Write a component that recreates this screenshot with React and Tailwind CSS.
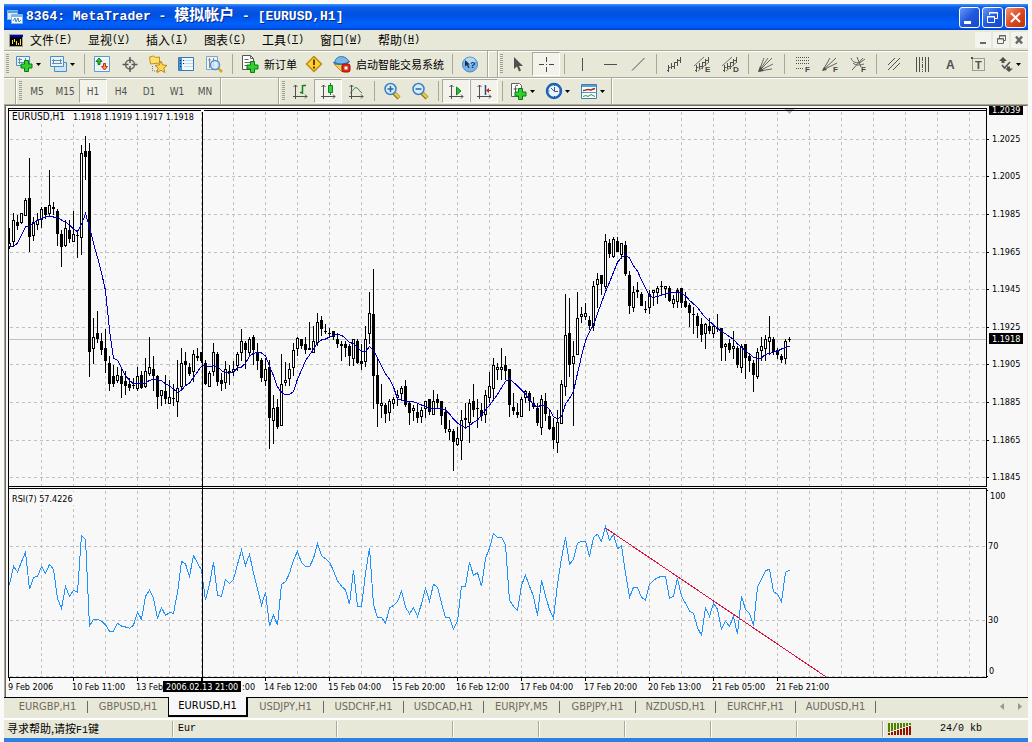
import React from "react";

/* ---------- market data (one entry per hourly bar, 4px apart) ---------- */
/* each bar: high, body top, body bottom, low, u = rising / d = falling; thirds of a pixel below `top` */
const BARS = [
  {
    top: 100,
    rows: `384 430 438 448 u,340 361 425 443 u,346 367 380 392 d,340 340 367 373 u,295 300 346 346 u,174 295 413 456 d,352 367 407 425 u,340 361 373 392 u,322 328 358 385 u,322 322 346 358 d,210 316 341 349 u,306 321 329 346 d,328 334 404 438 d,390 404 443 503 d,362 385 436 443 u,361 391 419 431 d,334 404 425 425 u,392 405 407 476 d,136 160 412 465 u,108 153 171 240 d,129 153 758 831 d,654 712 745 792 u,633 700 719 731 d,699 724 752 765 d,687 745 785 821 d,768 789 854 873 d,795 829 854 861 d,802 826 841 850 u,802 829 854 894 d,813 845 860 887 d,834 853 866 873 d,834 857 860 867 d,801 829 866 873 u,813 826 866 867 d,774 814 860 866 u,711 802 821 828 u,768 807 828 873 d,826 829 893 927 d,870 870 886 918 u,825 873 899 912 d,841 892 910 912 u,852 896 899 918 d,780 865 905 951 u,744 790 860 873 u,756 783 797 855 d,789 801 822 828 d,750 763 815 848 u,744 768 776 783 d,756 756 783 790 d,780 789 854 855 d,813 820 860 860 u,729 757 815 828 u,757 762 848 860 d,820 840 854 873 d,783 808 848 867 u,795 813 821 855 d,783 808 815 828 u,756 763 796 815 u,687 724 757 783 u,724 729 752 809 d,711 718 757 765 u,705 712 752 795 d,731 756 785 810 d,774 780 836 848 d,774 808 842 860 u`,
  },
  {
    top: 260,
    rows: `302 322 476 567 d,405 446 482 554 u,418 442 502 509 d,282 374 497 498 u,308 362 368 380 u,309 328 355 380 u,249 271 322 350 u,231 234 265 290 u,237 237 260 267 d,232 253 272 284 d,186 264 272 272 d,198 244 277 278 u,159 187 247 260 u,168 180 208 228 d,193 213 215 224 d,204 219 222 230 d,213 214 233 240 d,219 237 252 266 d,243 252 260 303 d,243 252 266 291 d,252 258 290 318 d,238 238 296 318 u,238 243 311 312 d,252 304 312 330 d,198 238 304 322 u,96 160 220 252 u,27 162 350 447 d,298 346 432 503 d,372 430 437 476 u,429 435 464 490 d,418 424 458 483 u,411 418 430 447 u,391 405 413 438 u,378 385 401 417 u,360 379 436 443 d,423 430 459 497 d,436 445 452 483 u,429 456 476 490 d,442 451 470 490 u,423 424 445 476 u,418 418 458 465 d,390 424 464 464 u,402 417 430 447 d,423 424 470 497 d,441 457 509 521 d,480 507 515 542 u,507 513 548 633 d,501 535 554 560 u,450 482 542 600 u,430 475 482 509 d,418 430 488 549 u,372 424 452 471 d,417 444 446 504 d,430 450 470 483 d,390 406 464 489 u,338 379 413 431 u,294 316 386 425 u,309 322 329 362 u,264 322 328 362 u,288 316 335 362 d,328 328 437 471 d,399 441 453 465 d,429 457 465 476 d,411 418 470 470 u`,
  },
  {
    top: 220,
    rows: `511 515 532 551 u,514 520 545 573 d,531 549 563 567 d,549 564 611 618 d,525 538 622 647 u,519 544 584 603 d,567 588 629 630 d,594 621 662 687 d,570 607 667 699 u,480 493 610 611 u,222 346 500 530 u,234 340 437 471 d,363 409 431 618 u,216 295 403 404 u,261 283 289 309 u,249 280 289 302 u,288 301 320 330 d,184 199 316 335 u,159 178 192 264 u,165 165 194 225 d,42 64 199 207 u,57 70 104 116 d,52 58 110 116 u,52 64 98 98 d,70 70 103 117 u,63 75 162 168 d,153 165 258 284 d,198 217 262 276 u,186 210 218 236 d,216 222 258 258 d,243 267 269 281 d,210 223 262 284 u,210 211 218 258 u,198 205 217 252 u,183 198 200 230 d,198 199 206 236 u,198 205 245 246 d,225 238 251 264 u,204 211 245 264 u,204 205 251 264 d,216 244 263 264 d,249 256 281 321 d,261 282 284 342 d,279 289 320 354 d,295 312 347 366 d,309 313 341 387 u,294 318 335 342 d,312 319 341 354 u,282 325 329 336 d,324 324 386 423 d,369 373 380 425 u,357 370 392 399 d,333 379 386 417 u,378 385 437 444 d,372 380 442 461 u,372 373 416 477 d,399 409 425 456 d,420 430 467 516 d,384 397 470 477 u,351 379 392 423 u,345 358 386 423 u,288 352 365 405 u,351 358 398 405 d,385 391 405 417 d,402 409 422 431 d,357 364 416 432 u,352 357 360 366 d`,
  },
];

const AVERAGE = [
  { top: 100, ys: [439, 438, 430, 405, 380, 379, 370, 361, 355, 351, 348, 351, 351, 360, 367, 374, 387, 395, 373, 341, 380, 430, 472, 518, 572, 690, 775, 781, 805, 827, 841, 852, 851, 851, 850, 841, 838, 839, 842, 851, 857, 868, 877, 870, 857, 850, 832, 815, 799, 797, 800, 797, 800, 812, 817, 820, 815, 805, 801, 790, 768, 760, 757, 759, 768] },
  { top: 260, ys: [318, 347, 381, 397, 405, 403, 395, 357, 331, 302, 285, 268, 247, 240, 237, 231, 226, 223, 226, 235, 247, 251, 263, 273, 274, 260, 272, 294, 319, 342, 358, 381, 417, 420, 424, 426, 425, 430, 435, 440, 446, 447, 444, 446, 451, 461, 477, 489, 497, 503, 497, 487, 480, 465, 450, 436, 420, 403, 383, 364, 357, 367, 378, 390] },
  { top: 220, ys: [522, 538, 556, 560, 556, 556, 568, 590, 596, 590, 552, 535, 514, 460, 409, 362, 335, 315, 280, 248, 215, 187, 157, 127, 112, 105, 114, 137, 153, 180, 203, 230, 232, 230, 225, 223, 219, 217, 216, 218, 228, 241, 252, 262, 279, 293, 304, 315, 325, 335, 341, 350, 358, 372, 382, 393, 402, 412, 415, 414, 403, 400, 397, 393, 387, 383, 378] },
];

const RSI = [
  { top: 480, ys: [314, 259, 276, 245, 217, 328, 292, 289, 260, 280, 253, 268, 355, 385, 320, 349, 331, 336, 166, 178, 438, 418, 418, 424, 434, 454, 454, 430, 438, 441, 445, 436, 396, 418, 349, 331, 355, 414, 383, 406, 398, 400, 338, 244, 252, 289, 227, 249, 270, 361, 313, 247, 346, 349, 298, 310, 298, 253, 211, 256, 223, 280, 328, 376, 336, 438, 406, 436, 313, 305, 280, 241, 214, 248, 260, 260, 235, 191, 227, 236, 247, 272, 303, 319, 330, 373, 271, 379, 380, 280, 203, 374, 412, 412, 430, 384, 376, 365, 334, 382, 401, 383, 409, 372, 325, 363, 313, 322, 370, 412, 412, 448, 424, 319, 319, 247, 286, 278, 319, 235, 205, 160, 172, 172, 196, 361, 379, 391, 316, 286, 319, 349, 407, 301, 349, 388, 415, 313, 235, 172, 253, 238, 190, 184, 184, 230, 172, 163, 184, 139, 181, 163, 206, 197, 280, 352, 322, 322, 352, 361, 313, 301, 293, 289, 289, 355, 348, 295, 349, 370, 394, 400, 443, 466, 383, 409, 370, 388, 448, 424, 439, 409, 463, 349, 388, 401, 437, 322, 296, 272, 268, 335, 343, 367, 277, 271] },
];

const toPoints = (parts) =>
  parts
    .flatMap((p) => p.ys.map((y) => p.top + y / 3))
    .map((y, i) => `${9.5 + i * 4},${y.toFixed(1)}`)
    .join(" ");

const candles = BARS.flatMap((s) =>
  s.rows.split(",").map((r) => {
    const [h, t, b, l, dir] = r.split(" ");
    const y = (v) => Math.round(s.top + (Number(v) - 1) / 3);
    return { high: y(h), top: y(t), bottom: y(b), low: y(l), up: dir === "u" };
  })
);

const PRICES = [["1.2025", 139], ["1.2005", 176], ["1.1985", 214], ["1.1965", 252], ["1.1945", 289], ["1.1925", 327], ["1.1905", 364], ["1.1885", 402], ["1.1865", 440], ["1.1845", 477]];
/* [label, x]; the third and fourth are cut by the crosshair time */
const TIMES = [["9 Feb 2006", 0], ["10 Feb 11:00", 64], ["13 Feb", 128], [":00", 234], ["14 Feb 12:00", 256], ["15 Feb 04:00", 320], ["15 Feb 20:00", 384], ["16 Feb 12:00", 448], ["17 Feb 04:00", 512], ["17 Feb 20:00", 576], ["20 Feb 13:00", 640], ["21 Feb 05:00", 704], ["21 Feb 21:00", 768]];
const COLUMNS = Array.from({ length: 60 }, (_, i) => 41 + i * 32);

/* ------------------------------- chart -------------------------------- */
function Plot() {
  return (
    <svg className="block h-[589px] w-full" role="img" aria-label="EURUSD H1 chart with RSI(7)">
      <g transform="translate(-8 -108)" shapeRendering="crispEdges">
        <g stroke="#c0c0c0" strokeDasharray="3 3">
          {COLUMNS.map((x) => (
            <path key={x} d={`M${x}.5 112V486M${x}.5 491V677`} />
          ))}
          {PRICES.map(([p, y]) => <path key={p} d={`M10 ${y}.5H2400`} />)}
          <path d="M10 546.5H2400M10 620.5H2400M10 676.5H2400" />
        </g>
        <path d="M9 339.5H2400" stroke="#c0c0c0" />
        <path d="M785 109h9l-4.500 5z" fill="#b8b8b8" />
        <path d="M12 111h184v11H12zM12 492h64v13H12z" fill="#f8f8f8" />
        {candles.map((c, i) => {
          const x = 9 + i * 4;
          const h = Math.max(1, c.bottom - c.top + (c.up ? 1 : 0));
          return (
            <g key={i}>
              <rect x={x} y={c.high} width="1" height={Math.max(1, c.low - c.high)} />
              <rect x={x - 1} y={c.top} width="3" height={h} />
              {c.up && h > 2 && <rect x={x} y={c.top + 1} width="1" height={h - 2} fill="#fff" />}
            </g>
          );
        })}
        <polyline points={toPoints(AVERAGE)} fill="none" stroke="#0000c0" />
        <polyline points={toPoints(RSI)} fill="none" stroke="#1e90ff" />
        <path d="M605.500 528L827 677.500" stroke="#d8143c" fill="none" />
        <path d="M8 108.500H2400M8 110.500H201M204 110.500H2400M8 486.500H2400M8 488.500H2400M8 677.500H2400M8.500 108V678M202.500 112V682" stroke="#000" />
        {TIMES.map(([t], i) => <rect key={t} x={9 + i * 64} y="678" width="1" height="3" />)}
      </g>
      <g className="font-['DejaVu_Sans_Condensed','DejaVu_Sans',sans-serif] text-[9px]">
        <text x="4" y="12" className="text-[10px]">EURUSD,H1</text>
        <text x="65" y="12">1.1918 1.1919 1.1917 1.1918</text>
        <text x="4" y="394">RSI(7) 57.4226</text>
        {TIMES.map(([t, x]) => <text key={t} x={x} y="582">{t}</text>)}
        <rect x="155" y="573" width="78" height="11" />
        <text x="158" y="582" fill="#fff">2006.02.13 21:00</text>
      </g>
    </svg>
  );
}

function PriceAxis() {
  return (
    <svg className="block h-[591px] w-[41px] shrink-0 overflow-visible font-['DejaVu_Sans_Condensed','DejaVu_Sans',sans-serif] text-[9px]" role="img" aria-label="Price axis">
      <g transform="translate(-986 -106)">
        <g shapeRendering="crispEdges">
          <rect x="986" y="108" width="1" height="379" />
          <rect x="986" y="488" width="1" height="190" />
          {PRICES.map(([p, y]) => <rect key={p} x="987" y={y} width="2" height="1" />)}
          <rect x="987" y="490" width="1" height="1" />
          <rect x="987" y="676" width="1" height="1" />
          <rect x="989" y="106" width="34" height="9" />
          <rect x="989" y="333" width="34" height="11" />
        </g>
        {PRICES.map(([p, y]) => <text key={p} x="992" y={y + 3}>{p}</text>)}
        <text x="992" y="113" fill="#fff">1.2039</text>
        <text x="992" y="342" fill="#fff">1.1918</text>
        <text x="990" y="499">100</text>
        <text x="988" y="549">70</text>
        <text x="988" y="623">30</text>
        <text x="989" y="674">0</text>
      </g>
    </svg>
  );
}

/* ------------------------------- icons -------------------------------- */
const Icon = ({ children }) => (
  <svg viewBox="0 0 20 20" className="block size-5 shrink-0 overflow-visible" fill="none" aria-hidden="true">{children}</svg>
);
const G = "#505050";
const Plus = ({ x, y }) => (
  <path transform={`translate(${x} ${y})`} d="M3.500.500h4v3.500h3.500v4H7.500v3.500h-4V8H0V4h3.500z" fill="#2fd02f" stroke="#0b7a10" />
);
const SmallF = ({ children = "F" }) => (
  <text x="13" y="18" fill="#444" className="font-['Liberation_Sans',sans-serif] text-[8px] leading-none font-bold">{children}</text>
);
const Caret = () => (
  <svg viewBox="0 0 5 3" className="block h-[3px] w-[5px] shrink-0" aria-hidden="true"><path d="M0 0h5L2.500 3z" /></svg>
);
const Lens = () => (
  <>
    <path d="M12 12l5 5" stroke="#8a6a10" strokeWidth="4" />
    <path d="M12.500 12l4.500 4.500" stroke="#f0c840" strokeWidth="2.500" />
    <circle cx="8.500" cy="8" r="5.500" fill="#d4ecfc" stroke="#3a80c4" strokeWidth="1.500" />
  </>
);
const Axes = () => <path d="M5.500 4v14M3 15.500h14M3.500 6l2-2 2 2M15 13.500l2 2-2 2" stroke={G} />;
const Wave = () => <path d="M4.500 11v7M3 16.500h1.500M4.500 13.500h2M7.500 9v6M8 12.500h2M10.500 8v7M11 8.500h2M13.500 5v7M14 6.500h2M16.500 3v6" stroke={G} />;

const icons = {
  newChart: <Icon><path d="M1.500 2.500h13v9h-13z" fill="#e8f4fc" stroke="#4d8fc4" /><path d="M4.500 4v6M3 8.500h9M3 5.500h4M10.500 4v6" stroke="#6b8ba8" /><Plus x={6} y={6} /></Icon>,
  profiles: <Icon><path d="M5.500 8.500h12v9h-12z" fill="#cfe4f6" stroke="#4d8fc4" /><path d="M1.500 2.500h13v10h-13z" fill="#e8f4fc" stroke="#4d8fc4" /><path d="M4.500 5v5M3 9.500h10M3 6.500h10M11.500 5v5" stroke="#6b8ba8" /></Icon>,
  market: <Icon><path d="M2.500 2.500h15v15h-15z" fill="#f4faff" stroke="#5b9bd0" /><path d="M4 6h12M4 9h12M4 12h12M4 15h12" stroke="#d4e4f0" /><path d="M7 4l3 3.500H8v3H6v-3H4z" fill="#3cc03c" stroke="#0b7a10" /><path d="M12.500 16l-3-3.500h2v-3h2v3h2z" fill="#ff9060" stroke="#c03010" /></Icon>,
  crosshair: <Icon><circle cx="10" cy="10.500" r="4.500" stroke="#686868" strokeWidth="1.500" /><path d="M10 3v6M10 12v6M2.500 10.500h6M11.500 10.500h6" stroke="#585858" strokeWidth="1.500" /></Icon>,
  navigator: <Icon><path d="M1.500 3l4-1 2 1.500 4-.500v6l-9 1z" fill="#ffe070" stroke="#c09018" /><path d="M4.500 12v6M6 17h3" stroke="#777" strokeDasharray="1 1" /><path d="M13 7l1.800 4 4.200.400-3.200 2.800 1 4.300L13 16.300 9.200 18.500l1-4.300L7 11.400l4.200-.400z" fill="#ffd850" stroke="#b88818" /></Icon>,
  terminal: <Icon><path d="M2.500 3.500h15v13h-15z" fill="#f0f8ff" stroke="#3a78b8" /><path d="M3 4h3v12H3z" fill="#4d8fd0" /><path d="M8 6.500h9M8 9.500h9M8 12.500h9" stroke="#c0d8ec" /><path d="M4 6.500h1M4 9.500h1M4 12.500h1M7 6.500h1M7 9.500h1" stroke="#102040" /></Icon>,
  tester: <Icon><path d="M2.500 2.500h11v13h-11z" fill="#eef6fc" stroke="#7aa8cc" /><path d="M5.500 4v10M4 6h3M9.500 4v9M8 11h3" stroke="#888" /><path d="M14 14l4 4" stroke="#d8a820" strokeWidth="2.500" /><circle cx="11" cy="11" r="4.500" fill="#d4ecfccc" stroke="#5a90c0" strokeWidth="1.500" /></Icon>,
  order: <Icon><path d="M2.500 1.500h8l3 3v11h-11z" fill="#fff" stroke="#555" /><path d="M10.500 1.500v3h3M4.500 5.500h4M4.500 8.500h7M4.500 11.500h5" stroke="#666" /><Plus x={7} y={7} /></Icon>,
  warning: <Icon><path d="M10 2.500L17.500 10 10 17.500 2.500 10z" fill="#ffd030" stroke="#c08810" strokeWidth="1.500" strokeLinejoin="round" /><path d="M10 5.500v5.500M10 12.500v2" stroke="#604000" strokeWidth="2" /></Icon>,
  expert: <Icon><path d="M2 10l8 8 5-4-2-5z" fill="#f8cc40" stroke="#c09020" /><path d="M3 8c0-3 3-5.500 6.500-5.500S16 5 17 7.500c-3 3-11 3.500-14 .500z" fill="#78b8e8" stroke="#3878b8" /><path d="M1.500 8c2 3 13 3.500 16-1" stroke="#3878b8" strokeWidth="1.500" /><rect x="10" y="10" width="8" height="8" rx="2" fill="#e02818" stroke="#981008" /><path d="M12.500 12.500h3v3h-3z" fill="#fff" /></Icon>,
  help: <Icon><circle cx="10" cy="10.500" r="7.500" fill="#78b4e8" stroke="#4888c0" /><ellipse cx="10" cy="7" rx="5.500" ry="3.500" fill="#b0d8f8" /><path d="M5 6l5 4.500H8l1.500 3-1.500.500-1-3L5 12.500z" fill="#103060" /><text x="10" y="14" fill="#103060" className="font-['Liberation_Sans',sans-serif] text-[9px] font-bold">?</text></Icon>,
  cursor: <Icon><path d="M6 3v12l3-2.500 2 5 2-1-2-4.500h4z" fill={G} /></Icon>,
  cross: <Icon><path d="M10.500 3v5M10.500 13v5M3 10.500h5M13 10.500h5M10 10.500h1" stroke="#444" /></Icon>,
  vline: <Icon><path d="M10.500 4v13" stroke={G} /></Icon>,
  hline: <Icon><path d="M4 10.500h13" stroke={G} /></Icon>,
  trend: <Icon><path d="M4 16.500L16.500 4" stroke={G} /></Icon>,
  wave: <Icon><Wave /></Icon>,
  waveE: <Icon><Wave /><path d="M2 12L12 3M6 17L17 8" stroke="#707070" /><SmallF>E</SmallF></Icon>,
  waveD: <Icon><Wave /><path d="M2 12L12 3M6 17L17 8" stroke="#707070" /><SmallF>D</SmallF></Icon>,
  fan: <Icon><path d="M3 17L8 4M3 17L12 4M3 17L16 4M3 17l14-7M3 17l13-2" stroke="#686868" /><path d="M2 18l2-6 4 5z" fill={G} /></Icon>,
  fibo: <Icon><path d="M4 3.500h13M4 6.500h13M4 9.500h13M4 14.500h8" stroke={G} strokeDasharray="1 1" /><SmallF /></Icon>,
  fiboFan: <Icon><path d="M3 16L10 4M3 16L16 4M3 16l14-7" stroke="#606060" /><path d="M2 17l2-4 3 3z" fill={G} /><SmallF /></Icon>,
  fiboArc: <Icon><path d="M4 16L15 4M3 4c1 4 6 6 10 4l4-3M5 9c3 3 8 2 11 1M9 3l4 10" stroke="#606060" /><SmallF /></Icon>,
  channel: <Icon><path d="M4 11l7-7M4 16L16 4M9 16l7-7" stroke={G} /></Icon>,
  cycles: <Icon><path d="M4.500 3v15M7.500 3v15M13.500 3v15M16.500 3v15" stroke={G} /><path d="M10.500 3v15" stroke={G} strokeDasharray="4 1 1 1" /></Icon>,
  letterA: <Icon><text x="6" y="15" fill={G} className="font-['Liberation_Sans',sans-serif] text-[12px] font-bold">A</text></Icon>,
  letterT: <Icon><path d="M4.500 4.500h12v12h-12z" stroke={G} strokeDasharray="1 1" /><path d="M3 3h2v2H3z" fill={G} /><text x="7" y="15" fill={G} className="font-['Liberation_Sans',sans-serif] text-[11px] font-bold">T</text></Icon>,
  arrows: <Icon><path d="M4 7l4-4 4 4H9.500v2h-3V7zM10 14.500h2v-2h3v2h3l-4 3.500z" fill={G} /><path d="M7 11l2.500 3L15 8" stroke={G} strokeWidth="1.500" /></Icon>,
  barChart: <Icon><Axes /><path d="M12.500 4v9M10 11.500h2M13 4.500h3" stroke="#108020" strokeWidth="1.500" /></Icon>,
  candle: <Icon><Axes /><path d="M12.500 2v12" stroke="#108020" /><path d="M10.500 4.500h4v7h-4z" fill="#30d040" stroke="#108020" /></Icon>,
  lineChart: <Icon><Axes /><path d="M4 12c3-1 4-7 7-5 2 1 3 4 5 5" stroke="#308040" /></Icon>,
  zoomIn: <Icon><Lens /><path d="M8.500 5v6M5.500 8h6" stroke="#2868a8" strokeWidth="1.500" /></Icon>,
  zoomOut: <Icon><Lens /><path d="M5.500 8h6" stroke="#2868a8" strokeWidth="1.500" /></Icon>,
  scroll: <Icon><Axes /><path d="M10.500 6l4.500 4-4.500 4z" fill="#30c040" stroke="#108020" /></Icon>,
  shift: <Icon><Axes /><path d="M11.500 4v10" stroke="#205090" strokeWidth="1.500" /><path d="M17 9h-2V7l-3 2.500 3 2.500v-2h2z" fill="#c03010" /></Icon>,
  indicators: <Icon><path d="M2.500 2.500h8l2 2v11h-10z" fill="#fff" stroke="#606060" /><path d="M9 4.500c-2-.500-2.500 0-2.500 2V13M4.500 8h4" stroke="#505050" /><Plus x={6} y={7} /></Icon>,
  clock: <Icon><circle cx="10" cy="10" r="7" fill="#e8f4ff" stroke="#1c60b8" strokeWidth="2.500" /><path d="M10.500 6v4.500H14M7 7l3 3M10 4.500h1M10 15.500h1M4.500 10h1M15 10h1" stroke="#405870" /></Icon>,
  template: <Icon><path d="M2.500 3.500h15v14h-15z" fill="#fff" stroke="#3a80b8" /><path d="M3 4h14v2H3z" fill="#58a0d8" /><path d="M3 11.500h14" stroke="#5898c8" /><path d="M4 9.500c3 0 3-1 5-1s3 1 4 0l3-1" stroke="#a02818" strokeWidth="1.500" /><path d="M4 15.500l3-1 2 1 3-2 4 2" stroke="#309040" /></Icon>,
};

/* ------------------------------ toolbars ------------------------------ */
const pressedLook = "border border-t-[#a8a898] border-r-white border-b-white border-l-[#a8a898] bg-[#f3f3eb]";
function Tool({ icon, label, text, pressed, caret, width = "w-7" }) {
  const align = text ? "justify-start pl-1" : caret ? "justify-start gap-px pl-[3px]" : "justify-center";
  return (
    <button
      type="button"
      aria-label={label}
      aria-pressed={pressed ? true : undefined}
      className={`flex h-6 shrink-0 items-center ${align} ${width} ${pressed ? pressedLook : ""}`}
    >
      {icons[icon]}
      {text && <span className="ml-1 text-[11px] leading-4 whitespace-nowrap text-black">{text}</span>}
      {caret && <Caret />}
    </button>
  );
}
const Sep = () => <span className="flex h-5 w-2 shrink-0 justify-center"><span className="w-px bg-[#a8a898]" /></span>;
const Grip = () => (
  <svg className="block h-5 w-[3px] shrink-0" viewBox="0 0 3 20" shapeRendering="crispEdges" aria-hidden="true"><path d="M1.500 0v20" stroke="#a0a090" strokeWidth="3" strokeDasharray="1 1" /></svg>
);
const Edge = () => <span className="w-[2px] shrink-0 self-stretch border-l border-l-[#a8a898] bg-white" />;

function MainToolbar() {
  return (
    <div role="toolbar" aria-label="标准" className="flex h-[27px] items-center border-t border-[#a8a898] pl-[2px] shadow-[inset_0_1px_#fff]">
      <Grip />
      <span className="w-[3px] shrink-0" />
      <Tool icon="newChart" label="新图表" caret width="w-[34px]" />
      <Tool icon="profiles" label="图表组合" caret width="w-[34px]" />
      <Sep />
      <Tool icon="market" label="市场报价" />
      <Tool icon="crosshair" label="数据窗口" />
      <Tool icon="navigator" label="导航" />
      <Tool icon="terminal" label="终端" />
      <Tool icon="tester" label="测试" />
      <Sep />
      <Tool icon="order" label="新订单" text="新订单" width="w-16" />
      <Tool icon="warning" label="编辑器" />
      <Tool icon="expert" label="启动智能交易系统" text="启动智能交易系统" width="w-[120px]" />
      <Sep />
      <Tool icon="help" label="帮助" />
      <span className="w-[3px] shrink-0" />
      <Edge />
      <span className="w-2 shrink-0" />
      <Edge />
      <span className="w-px shrink-0" />
      <Grip />
      <span className="w-px shrink-0" />
      <Tool icon="cursor" label="光标" />
      <Tool icon="cross" label="十字准线" pressed />
      <Sep />
      <Tool icon="vline" label="垂直线" />
      <Tool icon="hline" label="水平线" />
      <Tool icon="trend" label="趋势线" />
      <Sep />
      <Tool icon="wave" label="回归通道" />
      <Tool icon="waveE" label="等距通道" />
      <Tool icon="waveD" label="标准差通道" />
      <Sep />
      <Tool icon="fan" label="江恩扇形" />
      <Sep />
      <Tool icon="fibo" label="斐波纳契回调" />
      <Tool icon="fiboFan" label="斐波纳契扇形" />
      <Tool icon="fiboArc" label="斐波纳契弧线" />
      <Sep />
      <Tool icon="channel" label="平行线" />
      <Tool icon="cycles" label="周期线" />
      <Tool icon="letterA" label="文字" />
      <Tool icon="letterT" label="文字标签" />
      <Tool icon="arrows" label="箭头" caret width="w-[34px]" />
    </div>
  );
}

function ChartToolbar() {
  return (
    <div role="toolbar" aria-label="图表" className="flex h-[27px] items-center border-t border-[#a8a898] shadow-[inset_0_1px_#fff]">
      <span className="w-[11px] shrink-0" />
      <Edge />
      <span className="w-[2px] shrink-0" />
      <Grip />
      <span className="w-px shrink-0" />
      {["M5", "M15", "H1", "H4", "D1", "W1", "MN"].map((p) => (
        <button
          key={p}
          type="button"
          aria-pressed={p === "H1"}
          className={`h-6 w-7 shrink-0 text-center font-['DejaVu_Sans_Condensed','DejaVu_Sans',sans-serif] text-[10px] text-[#505050] ${p === "H1" ? pressedLook : ""}`}
        >
          {p}
        </button>
      ))}
      <span className="w-px shrink-0" />
      <Edge />
      <span className="w-14 shrink-0" />
      <Edge />
      <span className="w-[2px] shrink-0" />
      <Grip />
      <span className="w-px shrink-0" />
      <Tool icon="barChart" label="柱状图" />
      <Tool icon="candle" label="蜡烛图" pressed />
      <Tool icon="lineChart" label="折线图" />
      <Sep />
      <Tool icon="zoomIn" label="放大" />
      <Tool icon="zoomOut" label="缩小" />
      <Sep />
      <Tool icon="scroll" label="自动滚动" pressed />
      <Tool icon="shift" label="图表平移" pressed />
      <Sep />
      <Tool icon="indicators" label="技术指标" caret width="w-[35px]" />
      <Tool icon="clock" label="时间周期" caret width="w-[35px]" />
      <Tool icon="template" label="模板" caret width="w-[35px]" />
      <Edge />
    </div>
  );
}

/* ---------------------------- window chrome --------------------------- */
const winButton = "flex size-[21px] items-center justify-center rounded-[3px] border border-white";
const blueButton = "bg-[linear-gradient(135deg,#6a98f4,#2058e0_50%,#1848c8)]";
function TitleBar() {
  return (
    <header className="flex h-[26px] items-center bg-[linear-gradient(#3d95ff_0,#0a5ce8_12%,#0050e0_40%,#0060fc_75%,#0058f0_90%,#0040c0)] pr-[2px] pl-[3px]">
      <svg viewBox="0 0 16 16" className="size-4 shrink-0" aria-hidden="true">
        <path d="M.500 1.500h10v9H.500z" fill="#d8ecfa" stroke="#80b8e4" /><path d="M1 2h10v2H1z" fill="#58a0e0" />
        <path d="M4.500 5.500h11v9h-11z" fill="#fff" stroke="#80b8e4" /><path d="M5 6h10v2H5z" fill="#78b8ec" />
        <path d="M6 12l2-3 1 4 2-4 1 4 2-2" fill="none" stroke="#4080b0" />
      </svg>
      <h1 className="ml-[3px] flex-1 font-['Liberation_Mono','Noto_Sans_CJK_SC',monospace] text-[13px] leading-5 font-bold whitespace-pre text-white [text-shadow:1px_1px_#0a2a80]">
        8364: MetaTrader - <span className="text-[15px]">模拟帐户</span> - [EURUSD,H1]
      </h1>
      <div className="flex gap-[2px]">
        <button type="button" aria-label="最小化" className={`${winButton} ${blueButton}`}>
          <svg viewBox="0 0 15 15" className="size-[15px]"><path d="M2 11h7v3H2z" fill="#fff" /></svg>
        </button>
        <button type="button" aria-label="还原" className={`${winButton} ${blueButton}`}>
          <svg viewBox="0 0 15 15" className="size-[15px]" fill="none" stroke="#fff"><path d="M4.500 5V2.500h8v6H10M4 3h9" /><path d="M2.500 6.500h7v6h-7zM2 7h8" /></svg>
        </button>
        <button type="button" aria-label="关闭" className={`${winButton} bg-[linear-gradient(135deg,#f09878,#e04820_50%,#c03008)]`}>
          <svg viewBox="0 0 15 15" className="size-[15px]" stroke="#fff" strokeWidth="2"><path d="M3 3l9 9M12 3l-9 9" /></svg>
        </button>
      </div>
    </header>
  );
}

const MENUS = [["文件", "F"], ["显视", "V"], ["插入", "I"], ["图表", "C"], ["工具", "T"], ["窗口", "W"], ["帮助", "H"]];
const mdiButton = "flex size-4 items-center justify-center bg-[#f4f4ee]";
function MenuBar() {
  return (
    <nav className="flex h-5 items-center pl-[5px]">
      <svg viewBox="0 0 14 13" className="mr-[7px] h-[13px] w-[14px] shrink-0" shapeRendering="crispEdges" aria-hidden="true">
        <path d="M0 0h14v13H0z" fill="#a0a0a0" /><path d="M1 1h13v2H1z" fill="#0000c0" /><path d="M1 3h12v9H1z" fill="#000" />
        <path d="M3.500 6v4M5.500 5v3M7.500 7v4M9.500 9v2M11.500 5v6" stroke="#ffe800" />
      </svg>
      {MENUS.map(([name, key]) => (
        <button key={key} type="button" className="flex w-[58px] shrink-0 items-center text-left text-[12px] leading-4 whitespace-nowrap text-black">
          {name}<span className="font-['Liberation_Mono',monospace] text-[10px]">(<u>{key}</u>)</span>
        </button>
      ))}
      <div className="ml-auto flex gap-[2px] pr-px text-[#686860]">
        <button type="button" aria-label="最小化图表" className={mdiButton}><svg viewBox="0 0 16 16" className="size-4"><path d="M5 10h6v2H5z" fill="currentColor" /></svg></button>
        <button type="button" aria-label="还原图表" className={mdiButton}><svg viewBox="0 0 16 16" className="size-4" fill="none" stroke="currentColor"><path d="M6.500 6V3.500h6v5H11M6 4h7" /><path d="M4.500 6.500h6v5h-6zM4 7h7" /></svg></button>
        <button type="button" aria-label="关闭图表" className={mdiButton}><svg viewBox="0 0 16 16" className="size-4" stroke="currentColor" strokeWidth="2.500"><path d="M5 4.500l6 7M11 4.500l-6 7" /></svg></button>
      </div>
    </nav>
  );
}

const TABS = [
  ["EURGBP,H1", "w-20"], ["GBPUSD,H1", "w-20"], ["EURUSD,H1", "w-20"], ["USDJPY,H1", "w-[76px]"], ["USDCHF,H1", "w-20"], ["USDCAD,H1", "w-20"],
  ["EURJPY,M5", "w-[76px]"], ["GBPJPY,H1", "w-[76px]"], ["NZDUSD,H1", "w-20"], ["EURCHF,H1", "w-20"], ["AUDUSD,H1", "w-20"],
];
function ChartTabs() {
  return (
    <div role="tablist" aria-label="图表" className="flex h-[21px] border-t border-black pr-[6px] pl-1 font-['DejaVu_Sans_Condensed','DejaVu_Sans',sans-serif] text-[11px] leading-4">
      {TABS.map(([name, width], i) => {
        const active = i === 2;
        return (
          <button
            key={name}
            type="button"
            role="tab"
            aria-selected={active}
            className={`flex shrink-0 items-center justify-center whitespace-nowrap ${width} ${active ? "-mt-px h-5 border border-t-0 border-r-2 border-b-2 border-black bg-[#f8f8f8] text-black" : "h-[17px] text-[#706860]"}`}
          >
            <span className="flex-1">{name}</span>
            {!active && i !== 1 && <span className="h-3 w-px bg-[#706860]" />}
          </button>
        );
      })}
      <div className="ml-auto flex h-[17px] items-center gap-[14px]">
        <button type="button" aria-label="向左滚动"><svg viewBox="0 0 4 7" className="h-[7px] w-1"><path d="M4 0v7L0 3.500z" fill="#989890" /></svg></button>
        <button type="button" aria-label="向右滚动"><svg viewBox="0 0 4 7" className="h-[7px] w-1"><path d="M0 0v7l4-3.500z" fill="#989890" /></svg></button>
      </div>
    </div>
  );
}

const cell = "h-4 shrink-0 border-l border-[#a8a898] shadow-[inset_1px_0_#fff]";
function StatusBar() {
  return (
    <footer className="flex h-5 items-center border-t-2 border-white text-[11px] leading-4 whitespace-nowrap text-black">
      <span className="w-[168px] shrink-0 pl-[3px]">寻求帮助,请按<span className="font-['Liberation_Mono',monospace] text-[10px]">F1</span>键</span>
      <span className={`${cell} w-[164px] pl-[5px] font-['Liberation_Mono',monospace] text-[10px]`}>Eur</span>
      <span className={`${cell} w-[116px]`} />
      <span className={`${cell} w-[86px]`} />
      <span className={`${cell} w-[86px]`} />
      <span className={`${cell} w-[86px]`} />
      <span className={`${cell} w-[86px]`} />
      <span className={`${cell} w-[86px]`} />
      <span className={`${cell} flex items-center pl-[5px]`}>
        <svg viewBox="0 0 24 12" className="h-3 w-6" shapeRendering="crispEdges" aria-hidden="true">
          {[0, 1, 2, 3, 4, 5, 6, 7].map((n) => (
            <g key={n}>
              <rect x={n * 3} y="0" width="2" height={9 - n} fill="#508000" />
              <rect x={n * 3} y={10 - n} width="2" height={2 + n} fill="#981000" />
            </g>
          ))}
        </svg>
        <span className="ml-7 font-['Liberation_Mono',monospace] text-[10px]">24/0 kb</span>
      </span>
    </footer>
  );
}

export default function App() {
  return (
    <div className="bg-[#fafafa] pt-1 pr-1 font-['Noto_Sans_CJK_SC',sans-serif]">
      <div className="ml-1 bg-[#e8e8d8]">
        <TitleBar />
        <MenuBar />
        <MainToolbar />
        <ChartToolbar />
        <main className="border-t border-l border-[#a8a898]">
          <div className="flex border-t border-r border-l border-t-[#706860] border-r-[#f4e4dc] border-l-[#706860] bg-[#f8f8f8] pl-[2px]">
            <div className="min-w-0 flex-1 pt-[2px]"><Plot /></div>
            <PriceAxis />
          </div>
        </main>
        <ChartTabs />
        <StatusBar />
        <div className="h-1 bg-[#2c80e0]" />
      </div>
    </div>
  );
}
